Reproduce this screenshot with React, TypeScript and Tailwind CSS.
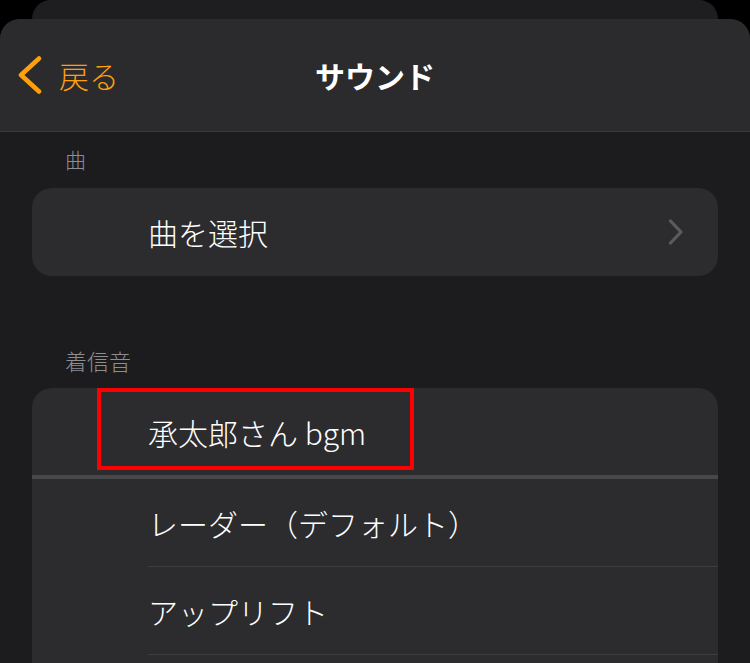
const font = { fontFamily: '"Noto Sans CJK JP", "Noto Sans", sans-serif' };

const ringtones = ['承太郎さん bgm', 'レーダー（デフォルト）', 'アップリフト', ''];

export default function App() {
  return (
    <div className="w-[750px] h-[663px] bg-black flex flex-col overflow-hidden" style={font}>
      {/* card behind the sheet */}
      <div className="mx-[32px] h-[19px] shrink-0 rounded-t-[20px] bg-[#1e1e20]" />

      <div className="flex-1 flex flex-col rounded-t-[20px] bg-[#1c1c1e] overflow-hidden">
        <div className="h-[113px] shrink-0 grid grid-cols-[1fr_auto_1fr] items-center bg-[#2b2b2d] border-b border-[#3a3a3c]">
          <button className="flex items-center gap-[17px] text-[#ff9f0a] pl-[18px]">
            <svg width="24" height="38" viewBox="0 0 24 38" fill="none">
              <polyline
                points="21,2.5 3,19 21,35.5"
                stroke="#ff9f0a"
                strokeWidth="4.5"
                strokeLinecap="round"
                strokeLinejoin="round"
              />
            </svg>
            <span className="text-[30px] font-light leading-none">戻る</span>
          </button>
          <div className="text-[30px] font-bold text-white leading-none">サウンド</div>
          <div />
        </div>

        <div className="h-[56px] shrink-0 flex items-center px-[65px] text-[21px] font-light text-[#8d8d93]">曲</div>
        <div className="mx-[32px] h-[88px] shrink-0 rounded-[20px] bg-[#2c2c2e] flex items-center pl-[116px] pr-[34px]">
          <span className="flex-1 text-[30px] font-light text-white leading-none">曲を選択</span>
          <svg width="16" height="26" viewBox="0 0 16 26" fill="none">
            <polyline
              points="2.5,2 13,13 2.5,24"
              stroke="#5c5c60"
              strokeWidth="3.2"
              strokeLinecap="round"
              strokeLinejoin="round"
            />
          </svg>
        </div>

        <div className="h-[56px] mt-[56px] shrink-0 flex items-center px-[65px] text-[22px] font-light text-[#8d8d93]">
          着信音
        </div>
        <div className="mx-[32px] shrink-0 rounded-t-[20px] bg-[#2c2c2e]">
          {ringtones.map((name, i) => (
            <div key={i}>
              <div className="relative h-[87px] flex items-center pl-[116px]">
                <span className="text-[30px] font-light text-white leading-none">{name}</span>
                {i === 0 && (
                  <div className="absolute left-[65px] top-0 w-[317px] h-[82px] border-4 border-[#ff0000]" />
                )}
              </div>
              {i === 0 ? (
                <div className="h-[4px] bg-[#48484a]" />
              ) : (
                <div className="ml-[116px] h-px bg-[#3d3d40]" />
              )}
            </div>
          ))}
        </div>
      </div>
    </div>
  );
}
